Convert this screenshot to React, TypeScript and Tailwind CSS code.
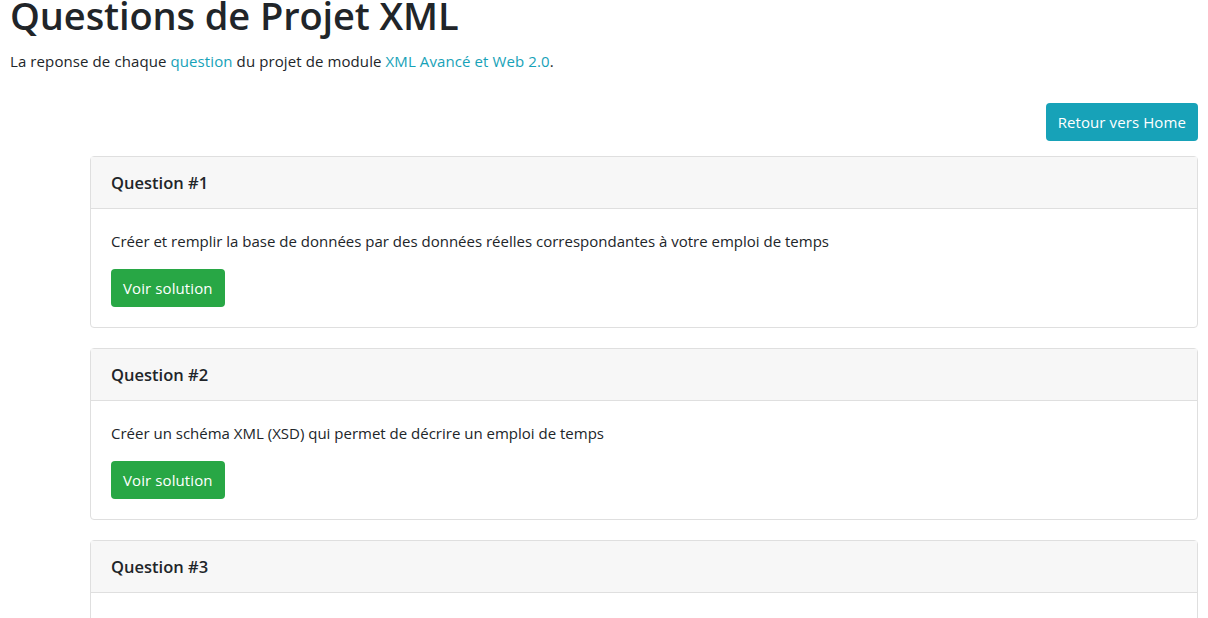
const QUESTIONS = [
  { n: 1, text: 'Créer et remplir la base de données par des données réelles correspondantes à votre emploi de temps' },
  { n: 2, text: 'Créer un schéma XML (XSD) qui permet de décrire un emploi de temps' },
  { n: 3, text: 'Créer un document XML valide selon le schéma XSD' },
];

export default function App() {
  return (
    <div className="min-h-screen overflow-hidden bg-white px-[10px] text-[#212529] font-['Open_Sans',sans-serif]">
      <h1 className="-mt-[9px] text-[38px] font-semibold leading-[48px] tracking-[-0.1px]">Questions de Projet XML</h1>
      <p className="mt-[10px] text-[15px] leading-6 tracking-[0.1px]">
        La reponse de chaque <a className="text-[#17a2b8]">question</a> du projet de module{' '}
        <a className="text-[#17a2b8]">XML Avancé et Web 2.0</a>.
      </p>

      <div className="mt-[30px] flex justify-end">
        <button className="h-[38px] rounded-[4px] bg-[#17a2b8] px-3 text-[15px] tracking-[0.1px] text-white">
          Retour vers Home
        </button>
      </div>

      <div className="ml-[80px] mt-[15px] flex flex-col gap-5">
        {QUESTIONS.map((q) => (
          <div key={q.n} className="rounded-[4px] border border-[#dfdfdf]">
            <div className="border-b border-[#dfdfdf] bg-[#f7f7f7] px-5 py-3 text-[16.5px] font-semibold leading-[27px]">
              Question #{q.n}
            </div>
            <div className="p-5">
              <p className="mb-4 text-[15px] leading-6">{q.text}</p>
              <button className="h-[38px] rounded-[4px] bg-[#28a745] px-3 text-[15px] tracking-[0.1px] text-white">
                Voir solution
              </button>
            </div>
          </div>
        ))}
      </div>
    </div>
  );
}
